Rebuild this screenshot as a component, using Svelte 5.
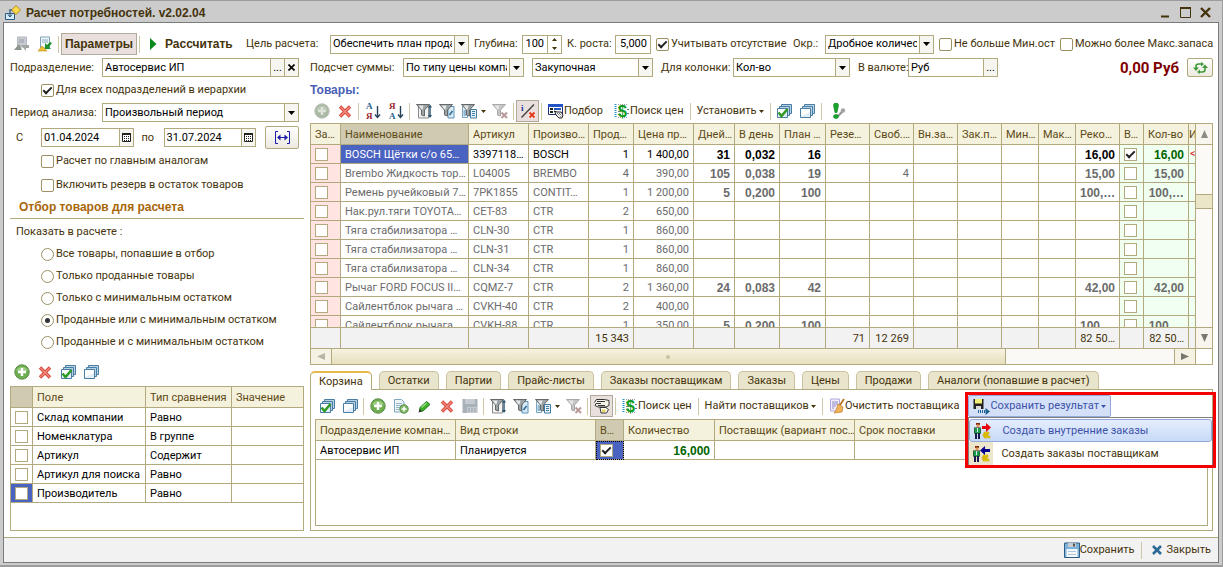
<script>
  let allDepartments = true;
  let mainAnalogs = false;
  let reserveInStock = false;
  let considerAbsence = true;
  let notAboveMin = false;
  let aboveMax = false;
  let department = 'Автосервис ИП';
  let dateFrom = '01.04.2024';
  let dateTo = '31.07.2024';
  let depth = '100';
  let growth = '5,000';
  let currency = 'Руб';
  let showMode = 3;
  let activeTab = 'Корзина';

  const showModes = [
    'Все товары, попавшие в отбор',
    'Только проданные товары',
    'Только с минимальным остатком',
    'Проданные или с минимальным остатком',
    'Проданные и с минимальным остатком',
  ];

  const filters = [
    { field: 'Склад компании', type: 'Равно' },
    { field: 'Номенклатура', type: 'В группе' },
    { field: 'Артикул', type: 'Содержит' },
    { field: 'Артикул для поиска', type: 'Равно' },
    { field: 'Производитель', type: 'Равно', current: true },
  ];

  // the last column has no width and takes what is left
  const columns = [
    { title: 'За…', width: 30 },
    { title: 'Наименование', width: 128, current: true },
    { title: 'Артикул', width: 60 },
    { title: 'Произво…', width: 60 },
    { title: 'Прод…', width: 45 },
    { title: 'Цена пр…', width: 60 },
    { title: 'Дней…', width: 41 },
    { title: 'В день', width: 45 },
    { title: 'План …', width: 46 },
    { title: 'Резе…', width: 44 },
    { title: 'Своб.…', width: 44 },
    { title: 'Вн.за…', width: 44 },
    { title: 'Зак.п…', width: 44 },
    { title: 'Мин…', width: 37 },
    { title: 'Мак…', width: 37 },
    { title: 'Реко…', width: 44 },
    { title: 'В…', width: 24 },
    { title: 'Кол-во', width: 45 },
    { title: 'И', width: 0 },
  ];

  const goods = [
    { name: 'BOSCH Щётки с/о 65…', code: '3397118…', maker: 'BOSCH', sold: 1, price: '1 400,00', days: '31', perDay: '0,032', plan: '16', free: '', qty: '16,00', on: true },
    { name: 'Brembo Жидкость тор…', code: 'L04005', maker: 'BREMBO', sold: 4, price: '390,00', days: '105', perDay: '0,038', plan: '19', free: '4', qty: '15,00' },
    { name: 'Ремень ручейковый 7…', code: '7PK1855', maker: 'CONTIT…', sold: 1, price: '1 200,00', days: '5', perDay: '0,200', plan: '100', free: '', qty: '100,…' },
    { name: 'Нак.рул.тяги TOYOTA…', code: 'CET-83', maker: 'CTR', sold: 2, price: '650,00' },
    { name: 'Тяга стабилизатора …', code: 'CLN-30', maker: 'CTR', sold: 1, price: '860,00' },
    { name: 'Тяга стабилизатора …', code: 'CLN-31', maker: 'CTR', sold: 1, price: '860,00' },
    { name: 'Тяга стабилизатора …', code: 'CLN-34', maker: 'CTR', sold: 1, price: '860,00' },
    { name: 'Рычаг FORD FOCUS II…', code: 'CQMZ-7', maker: 'CTR', sold: 2, price: '1 360,00', days: '24', perDay: '0,083', plan: '42', qty: '42,00' },
    { name: 'Сайлентблок рычага …', code: 'CVKH-40', maker: 'CTR', sold: 2, price: '400,00' },
    { name: 'Сайлентблок рычага …', code: 'CVKH-88', maker: 'CTR', sold: 1, price: '350,00', days: '5', perDay: '0,200', plan: '100', qty: '100,…' },
  ];

  const totals = ['', '', '', '', '15 343', '', '', '', '', '71', '12 269', '', '', '', '', '82 50…', '', '82 50…', ''];

  const tabs = ['Корзина', 'Остатки', 'Партии', 'Прайс-листы', 'Заказы поставщикам', 'Заказы', 'Цены', 'Продажи', 'Аналоги (попавшие в расчет)'];
</script>

{#snippet plus(off)}
  <svg width="16" height="16" viewBox="0 0 16 16" aria-hidden="true">
    <circle cx="8" cy="8" r="7.2" fill={off ? '#a9b9a3' : '#6fae50'} stroke={off ? '#b9c1b5' : '#5b8a48'} />
    <path d="M2.5 7a5.6 5 0 0 1 11 0z" fill={off ? '#bcc8b7' : '#9ccb84'} />
    <path d="M8 4v8M4 8h8" stroke={off ? '#dfe5dc' : '#fff'} stroke-width="2.4" />
  </svg>
{/snippet}

{#snippet cross()}
  <svg width="16" height="16" viewBox="0 0 16 16" aria-hidden="true">
    <path d="M3 3.500l10 10M13 3.500l-10 10" stroke="#d8483c" stroke-width="3.4" />
    <path d="M3.500 4l9 9M12.500 4l-9 9" stroke="#f28a7e" stroke-width="1.4" />
  </svg>
{/snippet}

{#snippet stack(checked)}
  <svg width="16" height="16" viewBox="0 0 16 16" aria-hidden="true">
    <path d="M5.500 1.500h10v9h-10z" fill="#b9d3e6" stroke="#4a7da3" />
    <path d="M3.500 3.500h10v9h-10z" fill="#b9d3e6" stroke="#4a7da3" />
    <path d="M1.500 5.500h10v9h-10z" fill="#e3eef6" stroke="#4a7da3" />
    <path d="M2 6h9v3L2 13z" fill="#fff" />
    {#if checked}
      <path d="M2.500 9.500l3 3.500 6-7" fill="none" stroke="#2f9a26" stroke-width="2.600" />
    {/if}
  </svg>
{/snippet}

{#snippet sort(up)}
  <svg width="16" height="18" viewBox="0 0 16 18" aria-hidden="true">
    <text x="1" y="7" class="glyph" fill={up ? '#1d5f8e' : '#9a1f2c'}>{up ? 'А' : 'Я'}</text>
    <text x="1" y="17" class="glyph" fill={up ? '#9a1f2c' : '#1d5f8e'}>{up ? 'Я' : 'А'}</text>
    <path d="M12.500 4v11" stroke="#24415a" stroke-width="1.400" />
    <path d="M10 12.500l2.500 3 2.500-3" fill="none" stroke="#24415a" stroke-width="1.400" />
  </svg>
{/snippet}

{#snippet funnel(kind)}
  <svg width="16" height="16" viewBox="0 0 16 16" aria-hidden="true">
    {#if kind === 'doc'}
      <path d="M1.500 3.500h5v11h-5z" fill="#e8f2f8" stroke="#7ba6c2" />
      <path d="M9.500 6.500h6v8.500h-6z" fill="#e8f2f8" stroke="#3f7da6" />
      <path d="M11 8.500h3M11 10.500h3M11 12.500h3M2.500 8h3M2.500 10h3M2.500 12h3" stroke="#3f7da6" />
    {:else if kind === 'edit'}
      <path d="M9 3.500h6v11.500h-6z" fill="#d9eaf5" stroke="#5b93b8" />
      <path d="M10.500 12l3-4" stroke="#2b6a96" stroke-width="1.600" />
    {:else if kind === 'sort'}
      <path d="M2.500 3.500h10v11.500h-10z" fill="#f2f2f2" stroke="#8a8a8a" />
      <path d="M14 3v11" stroke="#24506e" stroke-width="1.400" />
      <path d="M12 4.500l2-3 2 3zM12 12l2 3 2-3z" fill="#24506e" />
    {/if}
    <path
      d="M.5 1.500h13l-5 5.500v6l-3-1v-5z"
      fill={kind === 'off' ? '#c4c4c4' : '#9da2a5'}
      stroke={kind === 'off' ? '#a8a8a8' : '#63686b'}
    />
    <path d="M2.500 2.500h5l-1 4h-1z" fill="#e6e8e9" />
    {#if kind === 'off'}
      <path d="M9.500 9.500l5.500 5.500M15 9.500l-5.500 5.500" stroke="#b79a98" stroke-width="2" />
    {/if}
  </svg>
{/snippet}

{#snippet price()}
  <svg width="16" height="16" viewBox="0 0 16 16" aria-hidden="true">
    <path d="M1.500 1v14" stroke="#2c8fd0" stroke-width="2" stroke-dasharray="1 1" />
    <path d="M4 1.500h10M4 14.500h10" stroke="#999" stroke-dasharray="1 1" />
    <path d="M4 4.500h3M4 8.500h3M4 11.500h3M13 6.500h2M13 10.500h2" stroke="#777" />
    <text x="4" y="14" class="dollar" fill="#0a9a1c">$</text>
  </svg>
{/snippet}

{#snippet caret()}
  <svg class="caret" width="5" height="3" viewBox="0 0 5 3" aria-hidden="true"><path d="M0 0h5L2.500 3z" fill="currentColor" /></svg>
{/snippet}

{#snippet down()}
  <svg width="7" height="4" viewBox="0 0 7 4" aria-hidden="true"><path d="M0 0h7L3.500 4z" fill="#000" /></svg>
{/snippet}

{#snippet calendar()}
  <svg width="9" height="9" viewBox="0 0 9 9" aria-hidden="true">
    <path d="M.5 1v7.500h8V1" fill="#fff" stroke="#222" />
    <path d="M0 1h9" stroke="#222" stroke-width="2" />
    <path d="M2 3.500h5M2 5.500h5M2 7.500h5" stroke="#222" stroke-dasharray="1 1" />
  </svg>
{/snippet}

{#snippet person(out)}
  <svg width="18" height="18" viewBox="0 0 18 18" aria-hidden="true">
    <path d="M3 1h4v2h-4z" fill="#7a2a12" />
    <path d="M3.500 2.500h3v3h-3z" fill="#e09a60" />
    <path d="M1 5.500h7v6h-7z" fill="#333" />
    <path d="M1.500 6h6v5.500h-6z" fill="#1b9c48" />
    <path d="M4 6h1v4h-1z" fill="#d9e6ff" />
    <path d="M2 11h2v6h-2zM5 11h2v6h-2z" fill="#1a1a4c" />
    <path d="M11 10h5v2h-5zM10 12h5v2h-5zM11 14h6v2h-6z" fill="#f1d50b" stroke="#b49600" stroke-width=".5" />
    {#if out}
      <path d="M9 4h4V1l5 4.500-5 4.500V7H9z" fill="#e8000d" />
    {:else}
      <path d="M18 4h-5V1L8 5.500 13 10V7h5z" fill="#00008c" />
    {/if}
  </svg>
{/snippet}

<div class="window">
  <header class="titlebar">
    <svg width="16" height="16" viewBox="0 0 16 16" aria-hidden="true">
      <path d="M.5 8.500h9v6h-9z" fill="#d8ecf8" stroke="#2a5f86" />
      <path d="M11 .5l4.500 4.500-4.500 4.500L6.500 5z" fill="#fbd94a" stroke="#b08a1c" />
      <path d="M5 5v6M3 9.500l2 2.500 2-2.500" fill="none" stroke="#1f4f74" />
      <path d="M4 5h3" stroke="#1f4f74" />
    </svg>
    <h1>Расчет потребностей. v2.02.04</h1>
    <button aria-label="Свернуть"><svg width="11" height="11" viewBox="0 0 11 11"><path d="M1 9.500h8" stroke="#45330b" stroke-width="2" /></svg></button>
    <button aria-label="Развернуть"><svg width="11" height="11" viewBox="0 0 11 11"><path d="M.5 1h10v9.500h-10z" fill="none" stroke="#45330b" /><path d="M0 1h11" stroke="#45330b" stroke-width="2" /></svg></button>
    <button aria-label="Закрыть окно"><svg width="11" height="11" viewBox="0 0 11 11"><path d="M1 1l9 9M10 1l-9 9" stroke="#45330b" stroke-width="2.400" /></svg></button>
  </header>

  <div class="client">
    <div class="params">
      <div class="commands">
        <button class="icon" aria-label="Восстановить настройки">
          <svg width="16" height="16" viewBox="0 0 16 16" aria-hidden="true">
            <path d="M3.500 1h9v10h-9z" fill="#c8ccd2" stroke="#b2b8c0" />
            <path d="M5 4h5M5 6h5" stroke="#9aa0a8" />
            <path d="M0 14l5-6 3 6z" fill="#8b968c" />
            <path d="M7 9l5 6v-3h3V9h-3z" fill="#a2a6a2" />
          </svg>
        </button>
        <button class="icon" aria-label="Сохранить настройки">
          <svg width="16" height="16" viewBox="0 0 16 16" aria-hidden="true">
            <path d="M3.500 1h9v11h-9z" fill="#f2f7fb" stroke="#7da0b8" />
            <path d="M5 4h6M5 6h6" stroke="#86a8c0" />
            <path d="M1 15l4-5 5 5z" fill="#f0c030" stroke="#b88c18" stroke-width=".6" />
            <path d="M8 7v6h6l-2-2 3-4-2-1-3 3z" fill="#1f8f2a" />
          </svg>
        </button>
        <span class="sep"></span>
        <button class="pressed wide">Параметры</button>
        <span class="sep"></span>
        <button class="run">
          <svg width="7" height="12" viewBox="0 0 7 12" aria-hidden="true"><path d="M0 0l6.500 6L0 12z" fill="#0b8a1c" /></svg>
          Рассчитать
        </button>
      </div>
      <label for="goal">Цель расчета:</label>
      <div class="combo">
        <select id="goal"><option>Обеспечить план прода</option></select>
        <span class="drop">{@render down()}</span>
      </div>
      <label for="depth">Глубина:</label>
      <div class="combo">
        <input id="depth" class="num" bind:value={depth} />
        <span class="spin">
          <svg width="5" height="12" viewBox="0 0 5 12" aria-hidden="true"><path d="M0 3h5L2.500 0zM0 9h5L2.500 12z" fill="#45330b" /></svg>
        </span>
      </div>
      <label for="growth">К. роста:</label>
      <div class="combo"><input id="growth" class="num" bind:value={growth} /></div>
      <label class="check"><input type="checkbox" bind:checked={considerAbsence} />Учитывать отсутствие</label>
      <label for="round">Окр.:</label>
      <div class="combo">
        <select id="round"><option>Дробное количес</option></select>
        <span class="drop">{@render down()}</span>
      </div>
      <label class="check"><input type="checkbox" bind:checked={notAboveMin} />Не больше Мин.ост</label>
      <label class="check"><input type="checkbox" bind:checked={aboveMax} />Можно более Макс.запаса</label>
    </div>

    <div class="columns">
      <aside>
        <div class="row">
          <label class="caption" for="department">Подразделение:</label>
          <div class="combo">
            <input id="department" bind:value={department} />
            <button class="drop" aria-label="Выбрать подразделение">...</button>
            <button class="drop" aria-label="Очистить подразделение">
              <svg width="7" height="7" viewBox="0 0 7 7"><path d="M.5.5l6 6M6.500.5l-6 6" stroke="#000" stroke-width="1.600" /></svg>
            </button>
          </div>
        </div>
        <label class="check indent first"><input type="checkbox" bind:checked={allDepartments} />Для всех подразделений в иерархии</label>
        <div class="row">
          <label class="caption" for="period">Период анализа:</label>
          <div class="combo">
            <select id="period"><option>Произвольный период</option></select>
            <span class="drop">{@render down()}</span>
          </div>
        </div>
        <div class="dates">
          <label for="from">С</label>
          <div class="combo">
            <input id="from" bind:value={dateFrom} />
            <button class="drop" aria-label="Календарь начала">{@render calendar()}</button>
          </div>
          <label for="to">по</label>
          <div class="combo">
            <input id="to" bind:value={dateTo} />
            <button class="drop" aria-label="Календарь конца">{@render calendar()}</button>
          </div>
          <button class="push" aria-label="Выбрать период">
            <svg width="17" height="13" viewBox="0 0 17 13">
              <path d="M4 .5H1.500v12H4M13 .5h2.500v12H13M4 6.500h9" fill="none" stroke="#1a1aa8" />
              <path d="M3 6.500l3.500-3v6zM14 6.500l-3.500-3v6z" fill="#1a1aa8" />
            </svg>
          </button>
        </div>
        <label class="check indent"><input type="checkbox" bind:checked={mainAnalogs} />Расчет по главным аналогам</label>
        <label class="check indent"><input type="checkbox" bind:checked={reserveInStock} />Включить резерв в остаток товаров</label>

        <h2>Отбор товаров для расчета</h2>

        <fieldset>
          <legend>Показать в расчете :</legend>
          {#each showModes as mode, i}
            <label class="check indent"><input type="radio" name="mode" value={i} bind:group={showMode} />{mode}</label>
          {/each}
        </fieldset>

        <div class="bar">
          <button class="icon" aria-label="Добавить отбор">{@render plus(false)}</button>
          <button class="icon" aria-label="Удалить отбор">{@render cross()}</button>
          <button class="icon" aria-label="Включить все отборы">{@render stack(true)}</button>
          <button class="icon" aria-label="Выключить все отборы">{@render stack(false)}</button>
        </div>

        <div class="grid-box">
          <table class="filters">
            <colgroup><col class="c-use" /><col class="c-field" /><col class="c-type" /><col /></colgroup>
            <thead>
              <tr><th class="current"></th><th>Поле</th><th>Тип сравнения</th><th>Значение</th></tr>
            </thead>
            <tbody>
              {#each filters as f}
                <tr>
                  <td class="box" class:selected={f.current}><input type="checkbox" aria-label={f.field} /></td>
                  <td>{f.field}</td>
                  <td>{f.type}</td>
                  <td></td>
                </tr>
              {/each}
            </tbody>
          </table>
        </div>
      </aside>

      <main>
        <div class="sums">
          <label for="sum-by">Подсчет суммы:</label>
          <div class="combo">
            <select id="sum-by"><option>По типу цены компа</option></select>
            <span class="drop">{@render down()}</span>
          </div>
          <div class="combo">
            <select aria-label="Тип цены"><option>Закупочная</option></select>
            <span class="drop">{@render down()}</span>
          </div>
          <label for="sum-col">Для колонки:</label>
          <div class="combo">
            <select id="sum-col"><option>Кол-во</option></select>
            <span class="drop">{@render down()}</span>
          </div>
          <label for="currency">В валюте:</label>
          <div class="combo">
            <input id="currency" bind:value={currency} />
            <button class="drop" aria-label="Выбрать валюту">...</button>
          </div>
          <output>0,00 Руб</output>
          <button class="push small" aria-label="Обновить">
            <svg width="15" height="12" viewBox="0 0 15 12">
              <path d="M3 6.500V4.500a2.500 2.500 0 0 1 2.500-2.500H8M12 5.500v2a2.500 2.500 0 0 1-2.500 2.500H7" fill="none" stroke="#3f9a3a" stroke-width="1.600" />
              <path d="M0 5.500h6L3 9zM9 6h6l-3-3.500zM8 0l3 2-3 2.500zM7 7.500V12L4 10z" fill="#3f9a3a" />
            </svg>
          </button>
        </div>

        <h3>Товары:</h3>

        <div class="bar">
          <button class="icon" aria-label="Добавить товар" disabled>{@render plus(true)}</button>
          <button class="icon" aria-label="Удалить товар">{@render cross()}</button>
          <span class="sep"></span>
          <button class="icon" aria-label="Сортировать по возрастанию">{@render sort(true)}</button>
          <button class="icon" aria-label="Сортировать по убыванию">{@render sort(false)}</button>
          <span class="sep"></span>
          <button class="icon" aria-label="Отбор и сортировка">{@render funnel('sort')}</button>
          <button class="icon" aria-label="Отбор по текущему значению">{@render funnel('edit')}</button>
          <button class="icon long" aria-label="История отборов">{@render funnel('doc')}{@render caret()}</button>
          <button class="icon" aria-label="Отключить отбор">{@render funnel('off')}</button>
          <span class="sep"></span>
          <button class="icon pressed" aria-label="Скрыть информацию">
            <svg width="16" height="16" viewBox="0 0 16 16" aria-hidden="true">
              <text x="1" y="8" class="glyph" fill="#1c2f9c">i</text>
              <path d="M1.500 14.500L14 1.500" stroke="#444" stroke-width="1.400" />
              <path d="M8.500 8.500h7v7h-7z" fill="#fbe3df" />
              <path d="M9.500 9.500l5 5M14.500 9.500l-5 5" stroke="#e03a1c" stroke-width="1.800" />
            </svg>
          </button>
          <span class="sep"></span>
          <button class="text">
            <svg width="16" height="16" viewBox="0 0 16 16" aria-hidden="true">
              <path d="M.5 1.500h14v10H.5z" fill="#fff" stroke="#1d2f7c" />
              <path d="M0 1h15v3H0z" fill="#2454c4" />
              <path d="M2 6h3M2 9h3" stroke="#222" stroke-width="2" />
              <path d="M6 6h7" stroke="#2454c4" stroke-width="2" />
              <path d="M6 8l3 1 4 0 2 3-1 3h-3l-3-3-1-3z" fill="#f3f3f3" stroke="#222" />
              <path d="M9 10l4 4M11 10l3 3" stroke="#444" stroke-dasharray="1 1" />
            </svg>Подбор
          </button>
          <span class="sep blank"></span>
          <button class="text">{@render price()}Поиск цен</button>
          <span class="sep"></span>
          <button class="text">Установить{@render caret()}</button>
          <span class="sep"></span>
          <button class="icon" aria-label="Отметить все">{@render stack(true)}</button>
          <button class="icon" aria-label="Снять отметки">{@render stack(false)}</button>
          <span class="sep"></span>
          <button class="icon late" aria-label="Проверить">
            <svg width="14" height="16" viewBox="0 0 14 16" aria-hidden="true">
              <path d="M6 13l4-4M8 11l3-3.500" stroke="#9a9a9a" stroke-width="2.400" />
              <circle cx="11" cy="7.500" r="2.200" fill="#a4a4a4" />
              <path d="M1.500 2.500a2.500 2.500 0 0 1 5 0L5 9.500H3z" fill="#18a52c" stroke="#0c7a1c" stroke-width=".6" />
              <ellipse cx="4" cy="13.500" rx="2.500" ry="2" fill="#18a52c" stroke="#0c7a1c" stroke-width=".6" />
            </svg>
          </button>
        </div>

        <div class="goods">
          <div class="viewport">
            <table>
              <colgroup>
                {#each columns as c}
                  <col style={c.width ? `width:${c.width}px` : ''} />
                {/each}
              </colgroup>
              <thead>
                <tr>
                  {#each columns as c}
                    <th class:current={c.current}>{c.title}</th>
                  {/each}
                </tr>
              </thead>
              <tbody>
                {#each goods as g, i}
                  <tr class:active={i === 0}>
                    <td class="box pink"><input type="checkbox" aria-label="Заказ" /></td>
                    <td class="name" class:selected={i === 0}>{g.name}</td>
                    <td>{g.code}</td>
                    <td>{g.maker}</td>
                    <td class="r">{g.sold}</td>
                    <td class="r">{g.price}</td>
                    <td class="r b">{g.days ?? ''}</td>
                    <td class="r b">{g.perDay ?? ''}</td>
                    <td class="r b">{g.plan ?? ''}</td>
                    <td></td>
                    <td class="r">{g.free ?? ''}</td>
                    <td></td>
                    <td></td>
                    <td></td>
                    <td></td>
                    <td class="r b">{g.qty ?? ''}</td>
                    <td class="box mint"><input type="checkbox" aria-label="Включить" checked={g.on} /></td>
                    <td class="r b mint qty">{g.qty ?? ''}</td>
                    <td class="mint mark">{i === 0 ? '<' : ''}</td>
                  </tr>
                {/each}
              </tbody>
              <tfoot>
                <tr>
                  {#each totals as t}
                    <td class="r">{t}</td>
                  {/each}
                </tr>
              </tfoot>
            </table>
          </div>
          <div class="vscroll">
            <svg width="7" height="8" viewBox="0 0 7 8" aria-hidden="true"><path d="M0 8h7L3.500 0z" fill="#8b8b85" /></svg>
            <span class="track"><i></i></span>
            <svg width="7" height="8" viewBox="0 0 7 8" aria-hidden="true"><path d="M0 0h7L3.500 8z" fill="#77776f" /></svg>
          </div>
          <div class="hscroll">
            <span class="end"><svg width="8" height="7" viewBox="0 0 8 7" aria-hidden="true"><path d="M8 0v7L0 3.500z" fill="#b8b5a6" /></svg></span>
            <span class="thumb"><i></i></span>
            <span class="rest"></span>
            <span class="end"><svg width="8" height="7" viewBox="0 0 8 7" aria-hidden="true"><path d="M0 0v7l8-3.500z" fill="#77776f" /></svg></span>
          </div>
          <div class="corner"></div>
        </div>

        <div class="tabs" role="tablist">
          {#each tabs as t}
            <button role="tab" aria-selected={t === activeTab} class:on={t === activeTab} on:click={() => (activeTab = t)}>{t}</button>
          {/each}
        </div>

        <section class="panel">
          <div class="bar">
            <button class="icon" aria-label="Отметить строки">{@render stack(true)}</button>
            <button class="icon" aria-label="Снять отметки строк">{@render stack(false)}</button>
            <span class="sep"></span>
            <button class="icon" aria-label="Добавить">{@render plus(false)}</button>
            <button class="icon" aria-label="Скопировать">
              <svg width="16" height="16" viewBox="0 0 16 16" aria-hidden="true">
                <path d="M1.500 1.500h7l2.500 2.500v10h-9.500z" fill="#f0f6fa" stroke="#7fa5bf" />
                <path d="M3 5.500h6M3 7.500h6M3 9.500h4M3 11.500h3" stroke="#8fb4cc" />
                <circle cx="11" cy="11" r="4.200" fill="#7db862" stroke="#5b8a48" />
                <path d="M11 8.500v5M8.500 11h5" stroke="#fff" stroke-width="1.500" />
              </svg>
            </button>
            <button class="icon" aria-label="Изменить">
              <svg width="16" height="16" viewBox="0 0 16 16" aria-hidden="true">
                <path d="M3.500 13.500l.5-4 6.500-6 3.500 3L7 13z" fill="#3fae2a" stroke="#1f7a18" />
                <path d="M5.500 9.500l5-4.500" stroke="#98df80" stroke-width="1.500" />
                <path d="M2.500 14.500l1-3.500 2.500 2.500z" fill="#333" />
              </svg>
            </button>
            <button class="icon" aria-label="Удалить">{@render cross()}</button>
            <button class="icon" aria-label="Записать" disabled>
              <svg width="16" height="16" viewBox="0 0 16 16" aria-hidden="true">
                <path d="M.5 1h15v14h-15z" fill="#a9b1b8" />
                <path d="M3 1h10v5H3zM5 9h10v6H5z" fill="#c6ccd1" />
                <path d="M6 11h8M6 13h8" stroke="#959da4" stroke-dasharray="2 1" />
              </svg>
            </button>
            <span class="sep"></span>
            <button class="icon" aria-label="Отбор и сортировка корзины">{@render funnel('sort')}</button>
            <button class="icon" aria-label="Отбор корзины по значению">{@render funnel('edit')}</button>
            <button class="icon long" aria-label="История отборов корзины">{@render funnel('doc')}{@render caret()}</button>
            <button class="icon" aria-label="Отключить отбор корзины">{@render funnel('off')}</button>
            <span class="sep"></span>
            <button class="icon pressed" aria-label="Связать с товаром">
              <svg width="16" height="16" viewBox="0 0 16 16" aria-hidden="true">
                <path d="M.5 4.500l2-3h8l4.500 1v5l-3 1.500h-8l-3-1.500 1-2h5M3 3.500h8M4 7.500h7" fill="#f6f4e8" stroke="#333" />
                <path d="M6 9.500h6l2.500 2-2 3.500H7z" fill="#fff" stroke="#333" />
                <path d="M8 11.500h4l-1 2.500H8z" fill="#e9d64a" />
              </svg>
            </button>
            <span class="sep"></span>
            <button class="text">{@render price()}Поиск цен</button>
            <span class="sep"></span>
            <button class="text">Найти поставщиков{@render caret()}</button>
            <span class="sep"></span>
            <button class="text">
              <svg width="16" height="16" viewBox="0 0 16 16" aria-hidden="true">
                <path d="M1.500 1h9v12h-9z" fill="#f0eefa" stroke="#b0a8d8" />
                <path d="M3 4h6M3 6h6M3 8h4M3 10h2" stroke="#8f87c8" />
                <path d="M15 1l-4 6" stroke="#b8741c" stroke-width="1.800" />
                <path d="M9 6l5 3-1 5-8 1c2-2 3-5 4-9z" fill="#f0b45a" stroke="#c07a20" stroke-width=".7" />
              </svg>Очистить поставщика
            </button>
            <span class="sep"></span>
            <div class="menu-host">
              <button class="text open" aria-haspopup="menu" aria-expanded="true">
                <svg width="17" height="17" viewBox="0 0 17 17" aria-hidden="true">
                  <path d="M.5 1h10v10H.5z" fill="#222" />
                  <path d="M2 1h7v4.500H2z" fill="#f3f07a" />
                  <path d="M3 8h5v3H3z" fill="#ddd" />
                  <path d="M5 13.500h8" stroke="#1d5f8e" stroke-width="3" stroke-dasharray="1 1" />
                  <path d="M12.500 10v7l4.500-3.500z" fill="#1d5f8e" />
                </svg>Сохранить результат{@render caret()}
              </button>
              <div class="menu" role="menu">
                <button role="menuitem" class="hot"><span>{@render person(true)}</span>Создать внутренние заказы</button>
                <button role="menuitem"><span>{@render person(false)}</span>Создать заказы поставщикам</button>
              </div>
              <div class="marker"></div>
            </div>
          </div>

          <div class="grid-box basket">
            <table>
              <colgroup><col class="b-wide" /><col class="b-wide" /><col class="b-flag" /><col class="b-qty" /><col class="b-wide" /><col /></colgroup>
              <thead>
                <tr>
                  <th>Подразделение компан…</th>
                  <th>Вид строки</th>
                  <th class="current">В…</th>
                  <th>Количество</th>
                  <th>Поставщик (вариант пос…</th>
                  <th>Срок поставки</th>
                </tr>
              </thead>
              <tbody>
                <tr>
                  <td>Автосервис ИП</td>
                  <td>Планируется</td>
                  <td class="box selected focus"><input type="checkbox" aria-label="Включить строку" checked /></td>
                  <td class="r b qty">16,000</td>
                  <td></td>
                  <td></td>
                </tr>
              </tbody>
            </table>
          </div>
        </section>
      </main>
    </div>

    <footer>
      <button class="text">
        <svg width="16" height="16" viewBox="0 0 16 16" aria-hidden="true">
          <path d="M.5 1h15v14.500H.5z" fill="#7fb2d8" stroke="#2f5f86" />
          <path d="M4 1h8v4H4z" fill="#c8ccd0" />
          <path d="M9 1.500h2v3H9z" fill="#555" />
          <path d="M2.500 7h11v8h-11z" fill="#f4f8fb" />
          <path d="M4 9.500h8M4 12.500h8" stroke="#a8c6dc" />
        </svg>Сохранить
      </button>
      <span class="sep"></span>
      <button class="text close">
        <svg width="10" height="10" viewBox="0 0 10 10" aria-hidden="true"><path d="M1 1l8 8M9 1L1 9" stroke="#2b6a96" stroke-width="2.600" /></svg>
        Закрыть
      </button>
    </footer>
  </div>
</div>

<style>
  :global(body) { background: #ccc; }

  .window {
    --line: #b3a97f;
    --ink: #45330b;
    min-height: 100vh; box-sizing: border-box; display: flex; flex-direction: column;
    background: #ccc; border: 1px solid #9c9c9c; border-width: 1px 1px 2px 0; padding: 0 3px 2px 3px;
    font-family: Roboto, "Liberation Sans", sans-serif; font-size: 11px; line-height: 14px; color: var(--ink);
  }

  button, input, select { font: inherit; color: inherit; margin: 0; }
  button { background: none; border: 0; padding: 0; display: flex; align-items: center; justify-content: center; white-space: nowrap; }
  label { white-space: nowrap; }
  svg { flex: none; }
  .glyph { font: bold 9px "Liberation Serif", serif; }
  .dollar { font: bold 16px "Liberation Sans", sans-serif; }
  h1, h2, h3, .wide, .run, .b { font-family: "Liberation Sans", Arial, sans-serif; font-size: 12px; font-weight: bold; }

  .titlebar { display: flex; align-items: center; height: 21px; padding: 2px 4px 0 2px; box-sizing: border-box; }
  .titlebar h1 { flex: 1; margin: 0 0 0 5px; }
  .titlebar button { width: 20px; }

  .client { flex: 1; display: flex; flex-direction: column; background: #fff; border: 1px solid #7a7a7a; }
  .params { display: grid; grid-template-columns: 231px 79px 139px 43px 40px 43px 36px 132px 27px 109px 116px 1fr; column-gap: 5px; align-items: center; padding: 10px 5px 0 6px; }
  .commands { display: flex; align-items: center; height: 22px; }
  .columns { flex: 1; display: grid; grid-template-columns: 294px 1fr; column-gap: 6px; padding: 3px 5px 6px 6px; }

  .combo { display: flex; height: 19px; box-sizing: border-box; border: 1px solid var(--line); background: #fff; color: #000; min-width: 0; }
  .combo select, .combo input { flex: 1; min-width: 0; width: 0; border: 0; padding: 0 2px; background: none; appearance: none; outline: none; border-radius: 0; text-overflow: clip; }
  .combo .num { text-align: right; padding-right: 3px; }
  .drop { width: 14px; flex: none; display: flex; align-items: center; justify-content: center; border-left: 1px solid var(--line); box-sizing: border-box; background: #f7f5f0; }
  .spin { width: 14px; display: flex; align-items: center; justify-content: center; border-left: 1px solid var(--line); box-sizing: border-box; }

  .check { display: flex; align-items: center; gap: 2px; }
  .check input, .box input { appearance: none; flex: none; width: 13px; height: 13px; border: 1px solid #9c8f62; background: #fff; display: grid; place-items: center; }
  .check input[type='checkbox'] { border-radius: 2px; }
  .check input[type='radio'] { border-radius: 50%; }
  input[type='checkbox']:checked::after { content: ''; width: 7px; height: 3px; border: solid #222; border-width: 0 0 2px 2px; transform: translateY(-1px) rotate(-45deg); box-sizing: content-box; }
  input[type='radio']:checked::after { content: ''; width: 5px; height: 5px; border-radius: 50%; background: #333; }
  .indent { margin-left: 31px; }

  .row { display: flex; align-items: center; padding-right: 5px; }
  .row .combo { flex: 1; }
  .caption { width: 92px; }

  aside { display: flex; flex-direction: column; }
  aside > .check { height: 24px; }
  aside > .first { height: 26px; }
  .dates { display: flex; align-items: center; padding: 4px 5px 0 6px; }
  .dates label { width: 25px; }
  .dates .combo + label { padding-left: 8px; box-sizing: border-box; }
  .dates label[for='to'] { width: 30px; }
  .dates .combo { flex: 1; }
  .push { height: 23px; width: 34px; margin-left: 9px; border: 1px solid var(--line); border-radius: 2px; background: linear-gradient(#fff, #ece9e0); }
  .small { width: 26px; height: 19px; margin: 0; }

  h2 { margin: 0 0 6px; padding: 3px 9px 4px; border-bottom: 1px solid var(--line); color: #a8660a; }
  h3 { margin: 6px 0 3px; color: #4a5fb8; }
  fieldset { border: 0; margin: 0; padding: 0; min-width: 0; }
  legend { padding: 0 0 0 6px; margin-bottom: 4px; }
  fieldset .check { height: 22px; }

  .bar { display: flex; align-items: center; height: 22px; }
  .icon { width: 23px; height: 22px; }
  .long { width: 30px; gap: 2px; }
  .late { margin-left: 4px; }
  .text { height: 22px; padding: 0 4px; }
  .caret { margin-left: 2px; }
  .sep { width: 1px; height: 17px; margin: 0 2px; background: #cfc8a8; }
  .blank { background: none; margin: 0 1px; }
  .pressed { background: #e9e0de; border: 1px solid #b3a99a; box-sizing: border-box; height: 22px; }
  .wide { width: 76px; }
  .run { gap: 8px; margin-left: 8px; }

  .grid-box { border: 1px solid var(--line); background: #fff; }
  table { width: 100%; table-layout: fixed; border-collapse: separate; border-spacing: 0; }
  th, td { box-sizing: border-box; padding: 1px 4px 0; border: solid var(--line); border-width: 0 1px 1px 0; white-space: nowrap; overflow: hidden; font-weight: normal; text-align: left; }
  th:last-child, td:last-child { border-right: 0; }
  th { height: 21px; background: #f4f1dc; color: #5d4a16; }
  td { height: 19px; color: #000; background: #fff; }
  th.current { background: #cfcab0; }
  td.r { text-align: right; }
  td.b { font-weight: bold; }
  td.box { padding-top: 0; }
  .box input { border-color: var(--line); }
  td.selected { background: #4a62c0; color: #fff; }
  td.focus { outline: 1px dotted #000; outline-offset: -1px; }

  aside .bar { margin: 8px 0 3px; }
  aside .grid-box { flex: 1; }
  .c-use { width: 22px; }
  .c-field { width: 113px; }
  .c-type { width: 86px; }

  .sums { display: grid; grid-template-columns: 85px 121px 121px 64px 117px 42px 90px 1fr 26px; column-gap: 8px; align-items: center; }
  output { text-align: right; font-size: 15px; font-weight: bold; color: #800000; }

  .goods { display: grid; grid-template-columns: 1fr 17px; border: 1px solid var(--line); margin-top: 1px; }
  .viewport { height: 225px; overflow: hidden; }
  .goods td { color: #6b6b6b; }
  .goods .active td { color: #000; }
  .goods .active .selected { color: #fff; }
  .goods td.pink { background: #ffe4e1; }
  .goods td.mint { background: #f0fff0; }
  .goods .active .qty, .basket .qty { color: #006400; }
  .goods .active .mark { padding: 0 1px; color: #e03030; }
  .goods th:last-child { padding: 1px 0 0; }
  .goods tfoot td { position: sticky; bottom: 0; height: 22px; background: #f2f2f2; color: var(--ink); border-top: 1px solid var(--line); }
  .vscroll { display: flex; flex-direction: column; align-items: center; justify-content: space-between; border-left: 1px solid var(--line); border-bottom: 1px solid var(--line); background: #f7f5ec; padding: 6px 0; }
  .track { flex: 1; align-self: stretch; margin: 6px 0; border: solid var(--line); border-width: 1px 0; background: #fbfaf6; display: flex; flex-direction: column; justify-content: flex-start; padding-top: 49px; }
  .track i { height: 13px; background: #ece6c8; border: solid var(--line); border-width: 1px 0; }
  .hscroll { display: flex; height: 15px; background: #faf9f5; }
  .end { width: 20px; display: flex; align-items: center; justify-content: center; background: #f5f2e4; border-right: 1px solid var(--line); }
  .end:last-child { border-left: 1px solid var(--line); border-right: 0; }
  .thumb { flex: 4; border-right: 1px solid var(--line); background: linear-gradient(#f7f3e0, #e6dfbe); display: flex; align-items: center; justify-content: center; }
  .thumb i { width: 4px; height: 4px; border-radius: 50%; background: #c8c2a4; }
  .rest { flex: 1; }
  .corner { border-left: 1px solid var(--line); }

  .tabs { display: flex; gap: 7px; margin-top: 6px; }
  .tabs button { height: 18px; padding: 0 8px; border: 1px solid #c9c19c; border-bottom: 0; border-radius: 5px 5px 0 0; background: #e9e4cc; }
  .tabs .on { height: 19px; margin-bottom: -1px; background: #fff; border-color: var(--line); border-top: 2px solid #e8b84a; z-index: 1; }

  main { display: flex; flex-direction: column; min-width: 0; }
  .panel { flex: 1; display: flex; flex-direction: column; border: 1px solid var(--line); padding: 5px 4px 4px; }
  .panel .bar { margin-bottom: 2px; }
  .basket { flex: 1; }
  .b-wide { width: 140px; }
  .b-flag { width: 28px; }
  .b-qty { width: 91px; }

  .menu-host { position: relative; }
  .open { border: 1px solid #94a9da; box-sizing: border-box; background: #d3e0f8; color: #3c52a8; border-radius: 2px; }
  .menu { position: absolute; z-index: 2; top: 22px; left: 0; width: 245px; padding: 1px 0; box-sizing: border-box; background: #fff; border: 1px solid #808080; }
  .menu button { width: 100%; height: 23px; justify-content: flex-start; gap: 8px; box-sizing: border-box; }
  .menu span { width: 24px; height: 23px; display: flex; align-items: center; justify-content: center; background: #ece6cc; }
  .menu .hot { background: linear-gradient(#e4edfc, #c8daf8); border: 1px solid #94a9da; border-radius: 3px; color: #3c52a8; }
  .menu .hot span { background: none; height: 21px; }
  .marker { position: absolute; z-index: 3; top: -3px; left: -3px; width: 251px; height: 76px; box-sizing: border-box; border: 3px solid #f40000; pointer-events: none; }

  footer { display: flex; align-items: center; justify-content: flex-end; height: 24px; padding-right: 3px; background: #f2f2f2; border-top: 1px solid var(--line); }
  .close { gap: 5px; margin-left: 4px; }
</style>
